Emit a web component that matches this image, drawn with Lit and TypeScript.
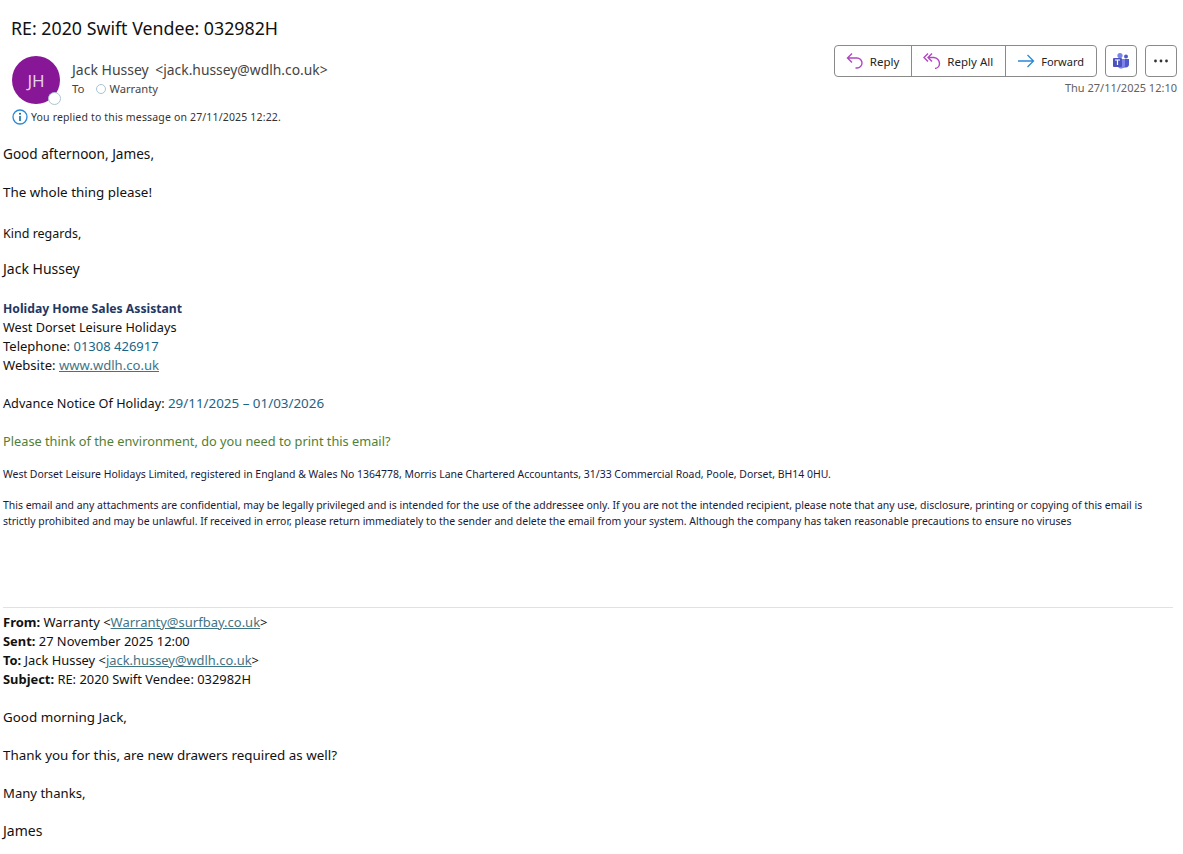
import { LitElement, html, css } from "lit";
import { customElement } from "lit/decorators.js";

@customElement("app-root")
export class AppRoot extends LitElement {
  static styles = css`
    :host { display: block; width: 1183px; height: 854px; overflow: hidden; background: #fff; color: #1a1a1a; font-family: "Noto Sans", "Open Sans", sans-serif; font-size: 13px; }
    .subject { font-size: 17.8px; line-height: 24px; padding: 16px 0 0 11px; color: #111; height: 40px; box-sizing: border-box; }
    .head { display: flex; justify-content: space-between; padding: 5px 6px 0 12px; height: 68px; box-sizing: border-box; }
    .left { display: flex; gap: 12px; }
    .avatar { position: relative; width: 48px; height: 48px; margin-top: 11px; border-radius: 50%; background: #881798; color: #e4cfe8; display: flex; align-items: center; justify-content: center; font-size: 17px; }
    .status { position: absolute; right: -1px; bottom: -1px; width: 11px; height: 11px; border-radius: 50%; background: #fff; border: 1.5px solid #a9c4d2; }
    .who { padding-top: 15px; }
    .from { font-size: 14px; line-height: 20px; color: #444; white-space: nowrap; }
    .addr { font-size: 13.85px; margin-left: 3px; }
    .to { display: flex; align-items: center; font-size: 11.2px; line-height: 16px; color: #444; margin-top: 1px; }
    .to-label { font-size: 11.5px; }
    .dot { width: 8px; height: 8px; border: 1px solid #a9c4d2; border-radius: 50%; margin: 0 4px 0 11px; }
    .right { display: flex; flex-direction: column; align-items: flex-end; }
    .bar { display: flex; gap: 8px; }
    .group { display: flex; border: 1px solid #8a8a8a; border-radius: 4px; height: 30px; }
    .btn { display: flex; align-items: center; gap: 6px; padding: 0 12px 0 11px; font-size: 11.5px; color: #242424; border-left: 1px solid #8a8a8a; }
    .btn:first-child { border-left: 0; }
    .btn.narrow { font-size: 11px; }
    .square { width: 30px; height: 30px; border: 1px solid #8a8a8a; border-radius: 4px; display: flex; align-items: center; justify-content: center; }
    .time { font-size: 11px; color: #616161; margin-top: 3px; line-height: 16px; }
    .info { display: flex; align-items: center; gap: 3px; padding-left: 12px; font-size: 10.5px; height: 18px; color: #333; letter-spacing: 0.16px; }
    .body { padding: 18px 3px 0; line-height: 19px; color: #111; }
    .body p { margin: 0; white-space: nowrap; }
    .blank { height: 19px; }
    .gap-20 { height: 20px; }
    .gap-22 { height: 22px; }
    .gap-16 { height: 16px; }
    .gap-21 { height: 21px; }
    .gap-18 { height: 18px; }
    .gap-15 { height: 15px; }
    .gap-78 { height: 78px; }
    .s125 { font-size: 12.5px; }
    .s127 { font-size: 12.7px; }
    .s129 { font-size: 12.9px; }
    .s131 { font-size: 13.1px; }
    .s134 { font-size: 13.4px; }
    .s136 { font-size: 13.6px; }
    .s140 { font-size: 14px; }
    .title { font-weight: 700; color: #1f3864; font-size: 12.2px; }
    .teal { color: #1a6585; }
    a { color: #3f7585; text-decoration: underline; }
    .green { color: #4f7f35; font-size: 12.77px; }
    .body p.small { font-size: 10.45px; line-height: 16px; color: #1a1a3a; white-space: normal; width: 1150px; }
    hr { border: 0; border-top: 1px solid #e1e1e1; margin: 0 7px 5px 0; }
  `;

  render() {
    return html`
      <div class="subject">RE: 2020 Swift Vendee: 032982H</div>
      <div class="head">
        <div class="left">
          <div class="avatar">JH<span class="status"></span></div>
          <div class="who">
            <div class="from">Jack Hussey <span class="addr">&lt;jack.hussey@wdlh.co.uk&gt;</span></div>
            <div class="to"><span class="to-label">To</span> <span class="dot"></span> Warranty</div>
          </div>
        </div>
        <div class="right">
          <div class="bar">
            <div class="group">
              <div class="btn">
                <svg width="18" height="18" viewBox="0 0 18 18" fill="none" stroke="#b146c2" stroke-width="1.4"><path d="M6 1.5 1.5 6 6 10.5M1.5 6H11a5 5 0 0 1 5 5v0a5 5 0 0 1-5 5H9.5"/></svg>
                Reply</div>
              <div class="btn">
                <svg width="18" height="18" viewBox="0 0 18 18" fill="none" stroke="#b146c2" stroke-width="1.4"><path d="M5 1.5 1 5.5 5 9.5M9 1.5 5 5.5 9 9.5M5 5.5h6a6 6 0 0 1 5.5 6v0a5 5 0 0 1-4.5 5"/></svg>
                Reply All</div>
              <div class="btn narrow">
                <svg width="18" height="18" viewBox="0 0 18 18" fill="none" stroke="#2b88d8" stroke-width="1.3"><path d="M1 9h15.5M10.5 3l6 6-6 6"/></svg>
                Forward</div>
            </div>
            <div class="square">
              <svg width="18" height="18" viewBox="0 0 18 18"><circle cx="8" cy="3.5" r="2.6" fill="#7b83eb"/><circle cx="14" cy="4.5" r="2" fill="#5059c9"/><path d="M10 7h7v5.5a3 3 0 0 1-3.5 3H10z" fill="#5059c9"/><path d="M6 7h7v7a4 4 0 0 1-7 1z" fill="#7b83eb"/><rect x="1" y="6" width="9" height="9" rx="1" fill="#4b53bc"/><path d="M3 8h5M5.5 8v5" stroke="#fff" stroke-width="1.2"/></svg>
            </div>
            <div class="square">
              <svg width="16" height="4" viewBox="0 0 16 4" fill="#333"><circle cx="2.5" cy="2" r="1.4"/><circle cx="8" cy="2" r="1.4"/><circle cx="13.5" cy="2" r="1.4"/></svg>
            </div>
          </div>
          <div class="time">Thu 27/11/2025 12:10</div>
        </div>
      </div>
      <div class="info">
        <svg width="16" height="16" viewBox="0 0 16 16" fill="none"><circle cx="8" cy="8" r="7" stroke="#2b88d8" stroke-width="1.3"/><circle cx="8" cy="4.8" r="1" fill="#00639c"/><path d="M8 7v5" stroke="#00639c" stroke-width="1.5"/></svg>
        You replied to this message on 27/11/2025 12:22.
      </div>
      <div class="body">
        <p class="s136">Good afternoon, James,</p>
        <div class="gap-20"></div>
        <p class="s134">The whole thing please!</p>
        <div class="gap-22"></div>
        <p class="s125">Kind regards,</p>
        <div class="gap-16"></div>
        <p class="s140">Jack Hussey</p>
        <div class="gap-21"></div>
        <p class="title">Holiday Home Sales Assistant</p>
        <p class="s127">West Dorset Leisure Holidays</p>
        <p>Telephone: <span class="teal">01308 426917</span></p>
        <p class="s131">Website: <a>www.wdlh.co.uk</a></p>
        <div class="blank"></div>
        <p><span class="s127">Advance Notice Of Holiday:</span> <span class="teal s134">29/11/2025 – 01/03/2026</span></p>
        <div class="blank"></div>
        <p class="green">Please think of the environment, do you need to print this email?</p>
        <div class="gap-15"></div>
        <p class="small">West Dorset Leisure Holidays Limited, registered in England &amp; Wales No 1364778, Morris Lane Chartered Accountants, 31/33 Commercial Road, Poole, Dorset, BH14 0HU.</p>
        <div class="gap-15"></div>
        <p class="small">This email and any attachments are confidential, may be legally privileged and is intended for the use of the addressee only. If you are not the intended recipient, please note that any use, disclosure, printing or copying of this email is strictly prohibited and may be unlawful. If received in error, please return immediately to the sender and delete the email from your system. Although the company has taken reasonable precautions to ensure no viruses</p>
        <div class="gap-78"></div>
        <hr />
        <p><b>From:</b> Warranty &lt;<a>Warranty@surfbay.co.uk</a>&gt;</p>
        <p class="s129"><b>Sent:</b> 27 November 2025 12:00</p>
        <p class="s129"><b>To:</b> Jack Hussey &lt;<a>jack.hussey@wdlh.co.uk</a>&gt;</p>
        <p class="s129"><b>Subject:</b> RE: 2020 Swift Vendee: 032982H</p>
        <div class="blank"></div>
        <p class="s134">Good morning Jack,</p>
        <div class="blank"></div>
        <p class="s134">Thank you for this, are new drawers required as well?</p>
        <div class="blank"></div>
        <p class="s131">Many thanks,</p>
        <div class="gap-18"></div>
        <p class="s140">James</p>
      </div>
    `;
  }
}
